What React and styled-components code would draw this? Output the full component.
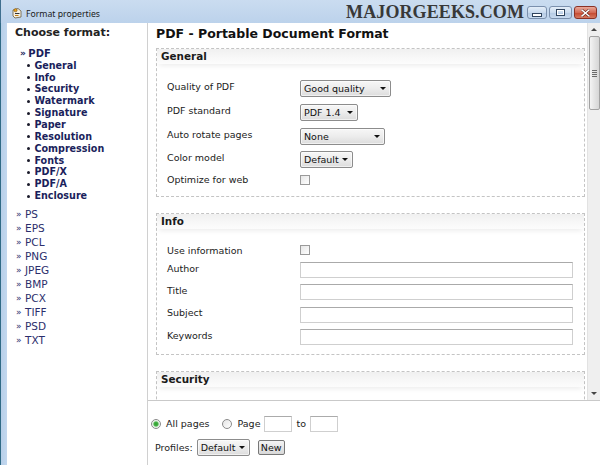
import React from 'react'
import styled, { createGlobalStyle } from 'styled-components'

const GlobalStyle = createGlobalStyle`
  html, body {
    margin: 0;
    padding: 0;
    background: #fff;
  }
  body {
    font-family: "DejaVu Sans", Verdana, sans-serif;
    color: #222;
  }
`

const pdfSections = [
  'General', 'Info', 'Security', 'Watermark', 'Signature', 'Paper',
  'Resolution', 'Compression', 'Fonts', 'PDF/X', 'PDF/A', 'Enclosure',
]
const formats = ['PS', 'EPS', 'PCL', 'PNG', 'JPEG', 'BMP', 'PCX', 'TIFF', 'PSD', 'TXT']

function AppIcon() {
  return (
    <IconBox viewBox="0 0 12 12" width="12" height="12">
      <path d="M2 3 L7 1.5 L10 4 L10 10 L4 11 L2 9 Z" fill="#f4efe2" stroke="#6b5a3a" strokeWidth="0.8" />
      <circle cx="4.5" cy="3.2" r="1.6" fill="#e8a21c" stroke="#6a4410" strokeWidth="0.5" />
      <rect x="4" y="6" width="4.5" height="1" fill="#333" />
      <rect x="4" y="8" width="3.5" height="1" fill="#c27f12" />
    </IconBox>
  )
}

function Select({ width, value }) {
  return (
    <SelectBox $width={width}>
      <span>{value}</span>
      <Arrow />
    </SelectBox>
  )
}

function App() {
  return (
    <>
      <GlobalStyle />
      <Window>
        <TitleBar>
          <AppIcon />
          <Caption>Format properties</Caption>
          <Watermark>MAJORGEEKS.COM</Watermark>
          <CaptionButtons>
            <CaptionButton $w={20}>
              <MinGlyph />
            </CaptionButton>
            <CaptionButton $w={23}>
              <MaxGlyph />
            </CaptionButton>
            <CaptionButton $w={23} $close>
              <svg width="9" height="8" viewBox="0 0 9 8">
                <path d="M1 1 L8 7 M8 1 L1 7" stroke="#5a1a10" strokeWidth="2.6" strokeLinecap="square" />
                <path d="M1 1 L8 7 M8 1 L1 7" stroke="#fff" strokeWidth="1.5" strokeLinecap="square" />
              </svg>
            </CaptionButton>
          </CaptionButtons>
        </TitleBar>

        <Body>
          <Frame />
          <Sidebar>
            <SideHeading>Choose format:</SideHeading>
            <FormatList>
              <FormatItem $active>
                <Chevron $active>»</Chevron>PDF
              </FormatItem>
              <SubList>
                {pdfSections.map((s) => (
                  <SubItem key={s}>
                    <Dot />
                    {s}
                  </SubItem>
                ))}
              </SubList>
              <OtherFormats>
                {formats.map((f) => (
                  <FormatItem key={f}>
                    <Chevron>»</Chevron>
                    {f}
                  </FormatItem>
                ))}
              </OtherFormats>
            </FormatList>
          </Sidebar>

          <Main>
            <ScrollArea>
              <Content>
                <PageTitle>PDF - Portable Document Format</PageTitle>

                <Section>
                  <SectionHeader>General</SectionHeader>
                  <SectionBody $pt={12.85} $pb={8}>
                    <Field $h={23.7}>
                      <Label>Quality of PDF</Label>
                      <Select width={91} value="Good quality" />
                    </Field>
                    <Field $h={23.7}>
                      <Label>PDF standard</Label>
                      <Select width={58} value="PDF 1.4" />
                    </Field>
                    <Field $h={23.7}>
                      <Label>Auto rotate pages</Label>
                      <Select width={85} value="None" />
                    </Field>
                    <Field $h={23.7}>
                      <Label>Color model</Label>
                      <Select width={53} value="Default" />
                    </Field>
                    <Field $h={16.1}>
                      <Label $flat>Optimize for web</Label>
                      <Checkbox />
                    </Field>
                  </SectionBody>
                </Section>

                <Section>
                  <SectionHeader>Info</SectionHeader>
                  <SectionBody $pt={12.65} $pb={6}>
                    <Field $h={17.7}>
                      <Label $flat>Use information</Label>
                      <Checkbox />
                    </Field>
                    {['Author', 'Title', 'Subject', 'Keywords'].map((l) => (
                      <Field key={l} $h={22.3}>
                        <Label>{l}</Label>
                        <TextInput />
                      </Field>
                    ))}
                  </SectionBody>
                </Section>

                <Section>
                  <SectionHeader>Security</SectionHeader>
                  <SectionBody $pt={12} $pb={40} />
                </Section>
              </Content>

              <Scrollbar>
                <ScrollButton>
                  <ArrowUp />
                </ScrollButton>
                <Thumb>
                  <Grip />
                  <Grip />
                  <Grip />
                  <Grip />
                </Thumb>
                <Track />
                <ScrollButton>
                  <ArrowDown />
                </ScrollButton>
              </Scrollbar>
            </ScrollArea>

            <Footer>
              <FooterRow>
                <RadioLabel>
                  <Radio $checked />
                  All pages
                </RadioLabel>
                <RadioLabel>
                  <Radio />
                  Page
                </RadioLabel>
                <SmallInput />
                <span>to</span>
                <SmallInput />
              </FooterRow>
              <FooterRow $indent>
                <span>Profiles:</span>
                <Select width={53} value="Default" />
                <Button>New</Button>
              </FooterRow>
            </Footer>
          </Main>
        </Body>
      </Window>
    </>
  )
}

const Window = styled.div`
  width: 600px;
  height: 465px;
  display: flex;
  flex-direction: column;
  overflow: hidden;
  background: #fff;
`

const TitleBar = styled.div`
  height: 23px;
  box-sizing: border-box;
  padding: 4px 3px 0 10px;
  display: flex;
  align-items: center;
  background: linear-gradient(to bottom, #cadcf0, #bcd2eb);
  border-left: 1px solid #3f6f8f;
`

const IconBox = styled.svg`
  flex: none;
  margin-right: 3px;
  margin-top: -2px;
`

const Caption = styled.span`
  font-family: "Noto Sans", "Open Sans", sans-serif;
  font-size: 8.7px;
  color: #1a1a1a;
`

const Watermark = styled.span`
  margin-left: auto;
  margin-right: 3px;
  margin-top: -3px;
  font-family: "Liberation Serif", "DejaVu Serif", serif;
  font-weight: bold;
  font-size: 18px;
  letter-spacing: 0.1px;
  color: #383838;
`

const CaptionButtons = styled.div`
  display: flex;
  gap: 2px;
  margin-top: -2px;
`

const CaptionButton = styled.div`
  width: ${(p) => p.$w}px;
  height: 13px;
  box-sizing: border-box;
  border: 1px solid ${(p) => (p.$close ? '#8a3226' : '#7b90ad')};
  border-radius: 3px;
  display: flex;
  align-items: center;
  justify-content: center;
  background: ${(p) =>
    p.$close
      ? 'linear-gradient(to bottom, #e9a99a, #d36a55 50%, #c4472f 51%, #d5785f)'
      : 'linear-gradient(to bottom, #e4eef9, #c9daee 50%, #b4cae4 51%, #c8daef)'};
`

const MinGlyph = styled.div`
  width: 8px;
  height: 2px;
  background: #fff;
  border: 1px solid #30445e;
  margin-top: 4px;
`

const MaxGlyph = styled.div`
  width: 7px;
  height: 5px;
  border: 1px solid #30445e;
  box-shadow: inset 0 0 0 1px #fff;
  background: transparent;
`

const Body = styled.div`
  flex: 1;
  display: flex;
  min-height: 0;
`

const Frame = styled.div`
  width: 7px;
  flex: none;
  background: linear-gradient(to right, #2f6a86 0, #2f6a86 1px, #b7cfe9 1px, #c3d8ef 100%);
`

const Sidebar = styled.nav`
  width: 140px;
  flex: none;
  border-right: 1px solid #d0d0d0;
  background: #fff;
`

const SideHeading = styled.div`
  font-weight: bold;
  font-size: 11px;
  line-height: 20px;
  padding-left: 8px;
  color: #222;
`

const FormatList = styled.div`
  margin-top: 5px;
  display: flex;
  flex-direction: column;
`

const FormatItem = styled.div`
  display: flex;
  align-items: center;
  padding-left: ${(p) => (p.$active ? 13 : 9)}px;
  font-size: ${(p) => (p.$active ? 10 : 10.5)}px;
  font-weight: ${(p) => (p.$active ? 'bold' : 'normal')};
  line-height: ${(p) => (p.$active ? 11.8 : 14)}px;
  color: ${(p) => (p.$active ? '#1b1f5c' : '#2b2e6c')};
`

const Chevron = styled.span`
  width: ${(p) => (p.$active ? 8.3 : 9)}px;
  flex: none;
  font-size: 9px;
`

const SubList = styled.div`
  display: flex;
  flex-direction: column;
`

const SubItem = styled.div`
  display: flex;
  align-items: center;
  gap: 4.4px;
  padding-left: 20px;
  font-size: 9.6px;
  font-weight: bold;
  line-height: 11.85px;
  color: #1b1f5c;
`

const Dot = styled.span`
  width: 3px;
  height: 3px;
  border-radius: 50%;
  background: #1a1a2a;
  flex: none;
`

const OtherFormats = styled.div`
  margin-top: 5px;
  display: flex;
  flex-direction: column;
`

const Main = styled.div`
  flex: 1;
  display: flex;
  flex-direction: column;
  min-width: 0;
`

const ScrollArea = styled.div`
  height: 377px;
  flex: none;
  display: flex;
  overflow: hidden;
`

const Content = styled.div`
  flex: 1;
  padding: 0 2px 0 8px;
  overflow: hidden;
`

const PageTitle = styled.h1`
  margin: 0 0 3px;
  font-size: 12.5px;
  line-height: 22px;
  font-weight: bold;
  color: #111;
`

const Section = styled.section`
  border: 1px dashed #c4c4c4;
  margin-bottom: 16px;
`

const SectionHeader = styled.div`
  height: 15px;
  line-height: 15px;
  padding-left: 4px;
  font-size: 10.4px;
  font-weight: bold;
  color: #1a1a1a;
  background: linear-gradient(to bottom, #f0f0f0, #f8f8f8 60%, #fcfcfc);
  box-shadow: 0 4px 5px -2px rgba(0, 0, 0, 0.07);
`

const SectionBody = styled.div`
  padding: ${(p) => p.$pt}px 11px ${(p) => p.$pb}px 10px;
  display: flex;
  flex-direction: column;
`

const Field = styled.div`
  height: ${(p) => p.$h}px;
  display: grid;
  grid-template-columns: 133px 1fr;
  align-items: center;
`

const Label = styled.span`
  font-size: 9.5px;
  color: #222;
  padding-bottom: ${(p) => (p.$flat ? 0 : 4)}px;
`

const SelectBox = styled.div`
  width: ${(p) => p.$width}px;
  height: 17px;
  box-sizing: border-box;
  border: 1px solid #8c8c8c;
  border-radius: 2px;
  background: linear-gradient(to bottom, #f7f7f7, #ececec 50%, #dcdcdc);
  display: flex;
  align-items: center;
  justify-content: space-between;
  padding: 0 4px 0 3px;
  font-size: 9.5px;
  color: #111;
  box-shadow: inset 0 0 0 1px rgba(255, 255, 255, 0.6);
`

const Arrow = styled.span`
  width: 0;
  height: 0;
  border-left: 3px solid transparent;
  border-right: 3px solid transparent;
  border-top: 3px solid #111;
`

const Checkbox = styled.span`
  width: 10px;
  height: 10px;
  box-sizing: border-box;
  border: 1px solid #9a9a9a;
  background: linear-gradient(to bottom right, #e6e6e6, #fff);
`

const TextInput = styled.span`
  display: block;
  height: 16px;
  box-sizing: border-box;
  border: 1px solid #cfcfcf;
  border-top-color: #aaaaaa;
  background: #fff;
`

const Scrollbar = styled.div`
  width: 13px;
  flex: none;
  display: flex;
  flex-direction: column;
  background: #efefef;
  border-left: 1px solid #e2e2e2;
  box-sizing: border-box;
`

const ScrollButton = styled.div`
  height: 13px;
  display: flex;
  align-items: center;
  justify-content: center;
`

const ArrowUp = styled.span`
  border-left: 3px solid transparent;
  border-right: 3px solid transparent;
  border-bottom: 3px solid #444;
`

const ArrowDown = styled.span`
  border-left: 3px solid transparent;
  border-right: 3px solid transparent;
  border-top: 3px solid #444;
`

const Thumb = styled.div`
  height: 74px;
  margin-left: 1px;
  box-sizing: border-box;
  border: 1px solid #a2a2a2;
  border-radius: 2px;
  background: linear-gradient(to right, #f4f4f4, #e4e4e4 50%, #d6d6d6);
  display: flex;
  flex-direction: column;
  align-items: center;
  justify-content: center;
  gap: 1px;
`

const Grip = styled.span`
  width: 5px;
  height: 1px;
  background: #6a6a6a;
`

const Track = styled.div`
  flex: 1;
`

const Footer = styled.div`
  flex: 1;
  border-top: 1px solid #c9c9c9;
  padding: 14.7px 0 0 3px;
  display: flex;
  flex-direction: column;
  gap: 7.5px;
  font-size: 9.5px;
  color: #222;
`

const FooterRow = styled.div`
  display: flex;
  align-items: center;
  gap: 4px;
  padding-left: ${(p) => (p.$indent ? 4 : 0)}px;

  & > button {
    margin-left: 4px;
  }
`

const RadioLabel = styled.label`
  display: flex;
  align-items: center;
  gap: 5px;
  margin-right: 9px;

  &:last-of-type {
    margin-right: 0;
  }
`

const Radio = styled.span`
  width: 10px;
  height: 10px;
  box-sizing: border-box;
  border-radius: 50%;
  border: 1px solid #8a8a8a;
  background: ${(p) =>
    p.$checked
      ? 'radial-gradient(circle, #2f9d2f 0, #47b347 2px, #cfe8cf 3px, #fff 4px)'
      : 'linear-gradient(to bottom right, #e4e4e4, #fff)'};
`

const SmallInput = styled.span`
  width: 28px;
  height: 16px;
  box-sizing: border-box;
  border: 1px solid #cfcfcf;
  border-top-color: #ababab;
`

const Button = styled.button`
  width: 27px;
  height: 15px;
  padding: 0;
  box-sizing: border-box;
  border: 1px solid #777;
  border-radius: 2px;
  background: linear-gradient(to bottom, #f4f4f4, #e6e6e6 50%, #d8d8d8);
  font-family: "DejaVu Sans", Verdana, sans-serif;
  font-size: 9.5px;
  color: #111;
`

export default App
